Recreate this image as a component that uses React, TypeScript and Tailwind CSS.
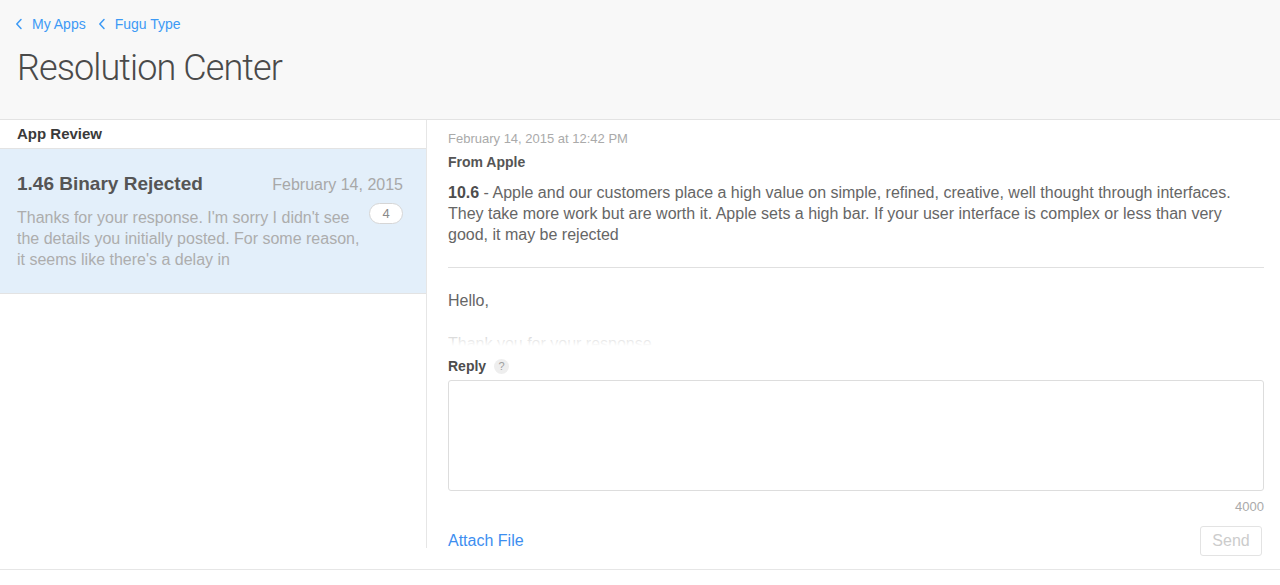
import React from "react";

function Chevron() {
  return (
    <svg width="8" height="12" viewBox="0 0 8 12" className="mr-[9px] ml-[-2px]">
      <path d="M6 1.5 L1.8 6 L6 10.5" fill="none" stroke="#3d9af5" strokeWidth="1.5" strokeLinecap="round" strokeLinejoin="round" />
    </svg>
  );
}

export default function App() {
  return (
    <div className="w-[1280px] h-[585px] bg-white font-['Liberation_Sans',Arial,sans-serif] overflow-hidden">
      <header className="h-[120px] bg-[#f8f8f8] border-b border-[#e3e3e3] px-[17px] pt-[14px]">
        <nav className="flex items-center h-[20px] text-[14px] text-[#3d9af5]">
          <Chevron />
          <span>My Apps</span>
          <span className="w-[14px]" />
          <Chevron />
          <span>Fugu Type</span>
        </nav>
        <h1 className="mt-[14px] text-[36px] leading-[40px] text-[#4a4a4a] font-light font-['Roboto',sans-serif] tracking-[-0.9px]">Resolution Center</h1>
      </header>
      <main className="flex h-[450px] border-b border-[#e6e6e6]">
        <aside className="w-[427px] h-[428px] border-r border-[#e6e6e6] shrink-0">
          <div className="h-[29px] border-b border-[#e3e3e3] px-[17px] pt-[1px] flex items-center text-[15px] font-bold text-[#3a3a3a]">App Review</div>
          <div className="h-[145px] bg-[#e3effa] border-b border-[#e3e3e3] pl-[17px] pr-[23px] pt-[22px]">
            <div className="flex items-baseline justify-between">
              <span className="text-[19px] leading-[26px] font-bold text-[#555555]">1.46 Binary Rejected</span>
              <span className="text-[16px] text-[#a8a8a8]">February 14, 2015</span>
            </div>
            <div className="flex items-start justify-between mt-[10px]">
              <p className="text-[16px] leading-[21px] text-[#adadad] w-[350px]">
                Thanks for your response. I'm sorry I didn't see<br />the details you initially posted. For some reason,<br />it seems like there's a delay in
              </p>
              <span className="mt-[-4px] w-[34px] h-[21px] rounded-full bg-white border border-[#d6d6d6] text-[13px] text-[#8a8a8a] flex items-center justify-center">4</span>
            </div>
          </div>
        </aside>
        <section className="flex-1 pl-[21px] pr-[16px]">
          <div className="pt-[11px] text-[13px] leading-[16px] text-[#aaaaaa]">February 14, 2015 at 12:42 PM</div>
          <div className="mt-[7px] text-[14px] leading-[16px] font-bold text-[#555555]">From Apple</div>
          <p className="mt-[12px] text-[16px] leading-[21px] text-[#666666]">
            <span className="font-bold text-[#4d4d4d]">10.6</span> - Apple and our customers place a high value on simple, refined, creative, well thought through interfaces.<br />They take more work but are worth it. Apple sets a high bar. If your user interface is complex or less than very<br />good, it may be rejected
          </p>
          <div className="mt-[22px] border-t border-[#e0e0e0]" />
          <div className="relative h-[78px] overflow-hidden pt-[22px]">
            <p className="text-[16px] leading-[21px] text-[#666666]">Hello,</p>
            <p className="mt-[22px] text-[16px] leading-[21px] text-[#666666]">Thank you for your response.</p>
            <div className="absolute left-0 right-0 bottom-0 h-[26px] bg-gradient-to-b from-white/30 to-white" />
          </div>
          <div className="mt-[11px] flex items-center h-[18px]">
            <span className="text-[14px] font-bold text-[#4d4d4d]">Reply</span>
            <span className="ml-[8px] w-[15px] h-[15px] rounded-full bg-[#eeeeee] text-[11px] text-[#a0a0a0] flex items-center justify-center">?</span>
          </div>
          <div className="mt-[5px] h-[111px] border border-[#dddddd] rounded-[3px]" />
          <div className="mt-[8px] text-right text-[13px] leading-[16px] text-[#aaaaaa]">4000</div>
          <div className="mt-[11px] flex items-center justify-between">
            <span className="text-[16px] text-[#3d8ef0]">Attach File</span>
            <span className="w-[62px] h-[30px] mr-[2px] border border-[#e3e3e3] rounded-[3px] text-[16px] text-[#cccccc] flex items-center justify-center">Send</span>
          </div>
        </section>
      </main>
    </div>
  );
}
